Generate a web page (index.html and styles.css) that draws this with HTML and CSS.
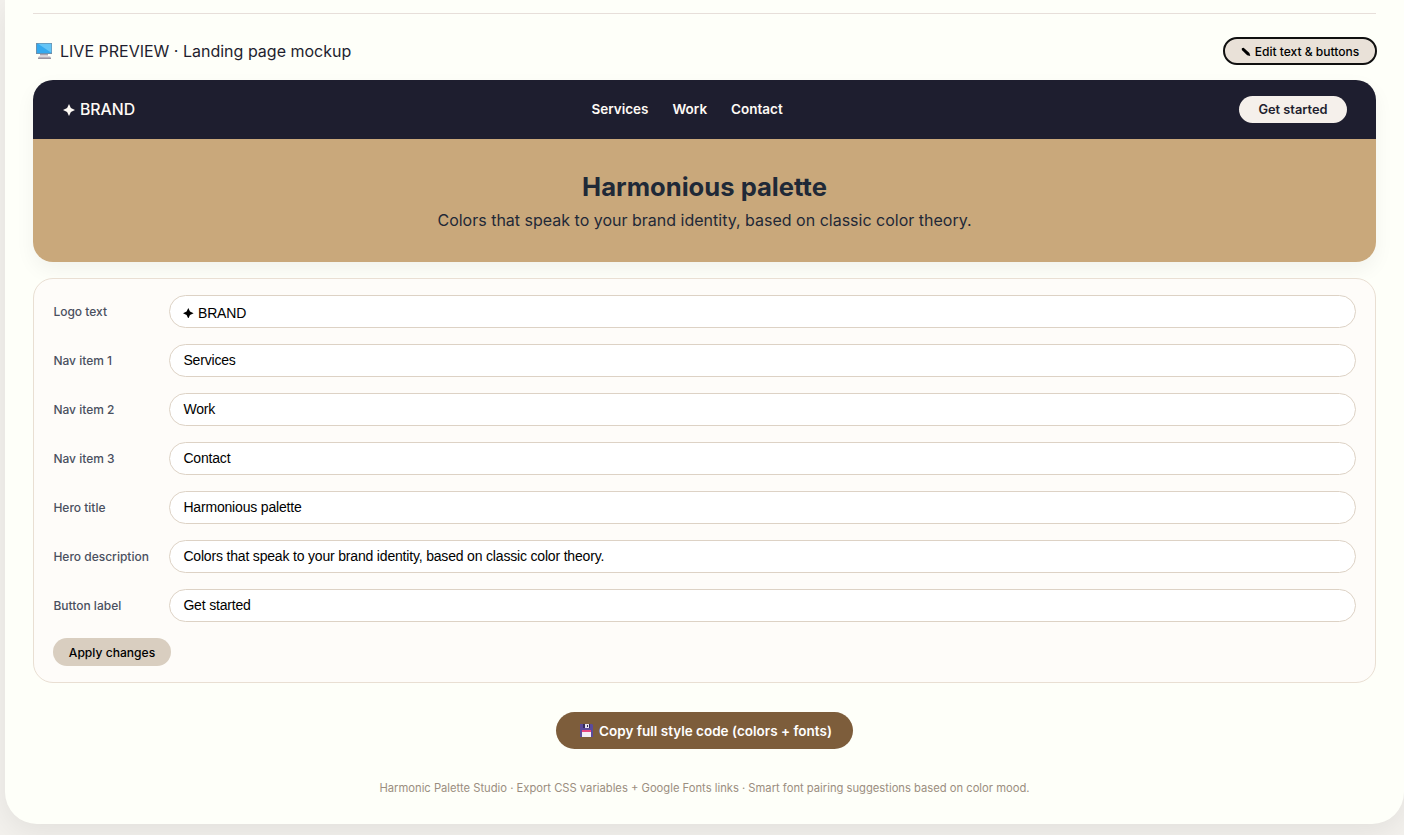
FILE: index.html
```html
<!DOCTYPE html>
<html lang="en">
<head>
<meta charset="utf-8">
<title>Harmonic Palette Studio</title>
<link rel="stylesheet" href="styles.css">
</head>
<body>
<main class="studio">
  <section class="preview">
    <div class="preview-head">
      <div class="preview-title">
        <svg class="icon-screen" viewBox="0 0 16 16"><path fill="#7f8999" d="M0 0h16v11H0z"/><path fill="#35a9ee" d="M.7.7h14.600v9.600H.7z"/><path fill="#65c5f6" d="M2 .7h13.300v9z"/><path fill="#d5d0d8" d="M4 11h8v2H4z"/><path fill="#b5afb9" d="M3 13.500h11l1 1V16H2v-1.500z"/><path fill="#9a949f" d="M2 15h13v1H2zM4 11h8v.7H4z"/></svg>
        <span>LIVE PREVIEW · Landing page mockup</span>
      </div>
      <button class="btn-edit"><svg class="icon-pencil" viewBox="0 0 10 10"><path d="M.8 1.200 2.600.7 8.400 6 9.300 9 6.200 8.200.8 3z"/></svg><span>Edit text &amp; buttons</span></button>
    </div>
    <div class="mockup">
      <nav class="mock-nav">
        <div class="brand"><svg class="star" viewBox="0 0 12 12"><path d="M6 0 7.900 4.100 12 6 7.900 7.900 6 12 4.100 7.900 0 6 4.100 4.100z"/></svg><span>BRAND</span></div>
        <div class="links"><span>Services</span><span>Work</span><span>Contact</span></div>
        <button class="btn-start">Get started</button>
      </nav>
      <div class="hero">
        <h2>Harmonious palette</h2>
        <p>Colors that speak to your brand identity, based on classic color theory.</p>
      </div>
    </div>
    <form class="editor">
      <div class="row"><label>Logo text</label><div class="field field-logo"><svg class="star" viewBox="0 0 12 12"><path d="M6 0 7.900 4.100 12 6 7.900 7.900 6 12 4.100 7.900 0 6 4.100 4.100z"/></svg><span>BRAND</span></div></div>
      <div class="row"><label>Nav item 1</label><div class="field">Services</div></div>
      <div class="row"><label>Nav item 2</label><div class="field">Work</div></div>
      <div class="row"><label>Nav item 3</label><div class="field">Contact</div></div>
      <div class="row"><label>Hero title</label><div class="field">Harmonious palette</div></div>
      <div class="row"><label>Hero description</label><div class="field">Colors that speak to your brand identity, based on classic color theory.</div></div>
      <div class="row"><label>Button label</label><div class="field">Get started</div></div>
      <button type="button" class="btn-apply">Apply changes</button>
    </form>
  </section>
  <button class="btn-copy"><svg class="icon-disk" viewBox="0 0 13 13"><path fill="#5b4b9b" d="M0 0h12l1 1v12H0z"/><path fill="#342b57" d="M3 0h7v4H3z"/><path fill="#e4e1ed" d="M5 0h4v4H5z"/><path fill="#342b57" d="M7 1h1v2H7z"/><path fill="#f3edf6" d="M2 6h9v7H2z"/><path fill="#e64581" d="M2 6h9v2H2z"/></svg><span>Copy full style code (colors + fonts)</span></button>
  <footer>Harmonic Palette Studio · Export CSS variables + Google Fonts links · Smart font pairing suggestions based on color mood.</footer>
</main>
</body>
</html>
```
FILE: styles.css
```css
* { box-sizing: border-box; }
body {
  margin: 0;
  height: 835px;
  overflow: hidden;
  background: #f3f1ed;
  font-family: Inter, sans-serif;
  color: #1e1e2f;
}
button { font-family: inherit; border: 0; margin: 0; }
.studio {
  width: 1399px;
  height: 824px;
  margin-left: 5px;
  padding: 13px 28px 0;
  display: flex;
  flex-direction: column;
  align-items: center;
  background: #fefff9;
  border-radius: 0 0 32px 32px;
  box-shadow: 0 8px 30px rgba(0, 0, 0, 0.07);
}
.preview { width: 100%; border-top: 1px solid #e7dfda; padding-top: 23px; }
.preview-head {
  display: flex;
  justify-content: space-between;
  align-items: center;
  height: 28px;
  margin-right: -1px;
}
.preview-title { display: flex; align-items: center; gap: 8px; padding-left: 3px; font-size: 16px; }
.icon-screen { width: 16px; height: 16px; }
.btn-edit {
  display: flex;
  align-items: center;
  justify-content: center;
  gap: 4px;
  width: 154px;
  height: 28px;
  padding: 1px 0 0;
  border: 2px solid #101010;
  border-radius: 20px;
  background: #e9e1d8;
  color: #000;
  font-size: 12.05px;
  font-weight: 500;
}
.icon-pencil { width: 10px; height: 10px; }
.mockup {
  margin-top: 15px;
  border-radius: 20px;
  overflow: hidden;
  box-shadow: 0 8px 20px rgba(0, 0, 0, 0.05);
}
.mock-nav {
  display: flex;
  justify-content: space-between;
  align-items: center;
  height: 59px;
  padding: 0 29px;
  background: #1e1e2f;
  color: #fefaf5;
}
.brand { display: flex; align-items: center; gap: 5px; padding-left: 1px; font-size: 15.8px; font-weight: 500; }
.star { width: 12px; height: 12px; fill: currentColor; flex: none; }
.links { display: flex; gap: 24px; padding-bottom: 2px; font-size: 13.5px; font-weight: 600; }
.btn-start {
  width: 108px;
  height: 27px;
  padding: 0;
  border-radius: 30px;
  background: #f5f0eb;
  color: #1e1e2f;
  font-size: 12.8px;
  font-weight: 600;
}
.hero { height: 123px; padding-top: 32px; background: #c9a87b; text-align: center; color: #1f2937; }
.hero h2 { margin: 0; font-size: 25.6px; line-height: 32px; font-weight: 700; }
.hero p { margin: 5px 0 0; font-size: 16px; line-height: 24px; }
.editor {
  display: grid;
  gap: 16px;
  margin-top: 16px;
  padding: 16px 19px;
  border: 1px solid #e9dfd3;
  border-radius: 20px;
  background: #fefcf9;
}
.row { display: flex; align-items: center; gap: 16px; }
.row label { width: 100px; padding-left: 0.4px; font-size: 12px; font-weight: 500; color: #4a5060; white-space: nowrap; }
.field {
  flex: 1;
  height: 33px;
  padding: 0 13.4px;
  border: 1px solid #ddd2c5;
  border-radius: 20px;
  background: #fff;
  color: #000;
  font: 14px/30px "Liberation Sans", Arial, sans-serif;
  letter-spacing: -0.18px;
}
.field-logo { display: flex; align-items: center; gap: 4px; padding-top: 3px; }
.field-logo .star { width: 10.600px; height: 10.600px; }
.btn-apply {
  width: 118px;
  height: 28px;
  padding: 1px 0 0;
  border-radius: 20px;
  background: #d9cec0;
  color: #000;
  font-size: 12.1px;
  font-weight: 500;
}
.btn-copy {
  display: flex;
  align-items: center;
  justify-content: center;
  gap: 6px;
  width: 297px;
  height: 37px;
  margin-top: 29px;
  padding: 0 0 0 3px;
  border-radius: 30px;
  background: #7d5d3b;
  color: #fff;
  font-size: 13.5px;
  font-weight: 600;
}
.icon-disk { width: 13px; height: 13px; }
footer { margin-top: 32px; font-size: 11.21px; line-height: 14px; color: #9b8e80; }
```
